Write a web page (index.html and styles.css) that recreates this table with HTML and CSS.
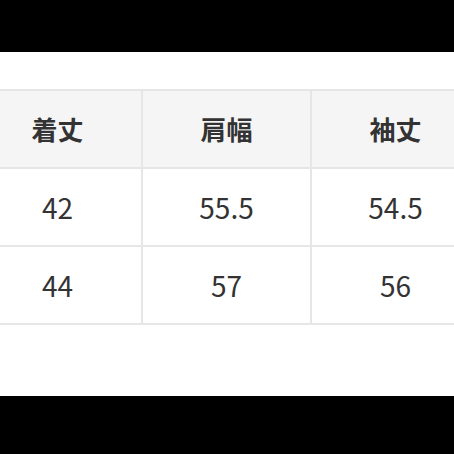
FILE: index.html
```html
<!DOCTYPE html>
<html lang="ja">
<head>
<meta charset="utf-8">
<link rel="stylesheet" href="styles.css">
</head>
<body>
<div class="frame">
  <div class="bar bar-top"></div>
  <main class="content">
    <div class="size-table">
      <div class="cell head">着丈</div>
      <div class="cell head">肩幅</div>
      <div class="cell head">袖丈</div>
      <div class="cell">42</div>
      <div class="cell">55.5</div>
      <div class="cell">54.5</div>
      <div class="cell">44</div>
      <div class="cell">57</div>
      <div class="cell">56</div>
    </div>
  </main>
  <div class="bar bar-bottom"></div>
</div>
</body>
</html>
```

FILE: styles.css
```css
html, body {
  margin: 0;
  padding: 0;
  background: #fff;
}
.frame {
  width: 454px;
  height: 454px;
  display: flex;
  flex-direction: column;
  overflow: hidden;
  font-family: "Noto Sans CJK JP", "Noto Sans", sans-serif;
  color: #333;
}
.bar {
  background: #000;
  flex: none;
}
.bar-top {
  height: 52px;
}
.bar-bottom {
  height: 58px;
}
.content {
  flex: 1;
  padding-top: 37px;
  background: #fff;
}
.size-table {
  display: grid;
  grid-template-columns: repeat(3, 169px);
  margin-left: -26px;
  border-top: 2px solid #e6e6e6;
}
.cell {
  box-sizing: border-box;
  height: 78px;
  border-right: 2px solid #e6e6e6;
  border-bottom: 2px solid #e6e6e6;
  display: flex;
  align-items: center;
  justify-content: center;
  font-size: 28px;
  line-height: 1;
  background: #fff;
}
.cell.head {
  background: #f5f5f5;
  font-weight: 700;
  font-size: 26px;
}
```
